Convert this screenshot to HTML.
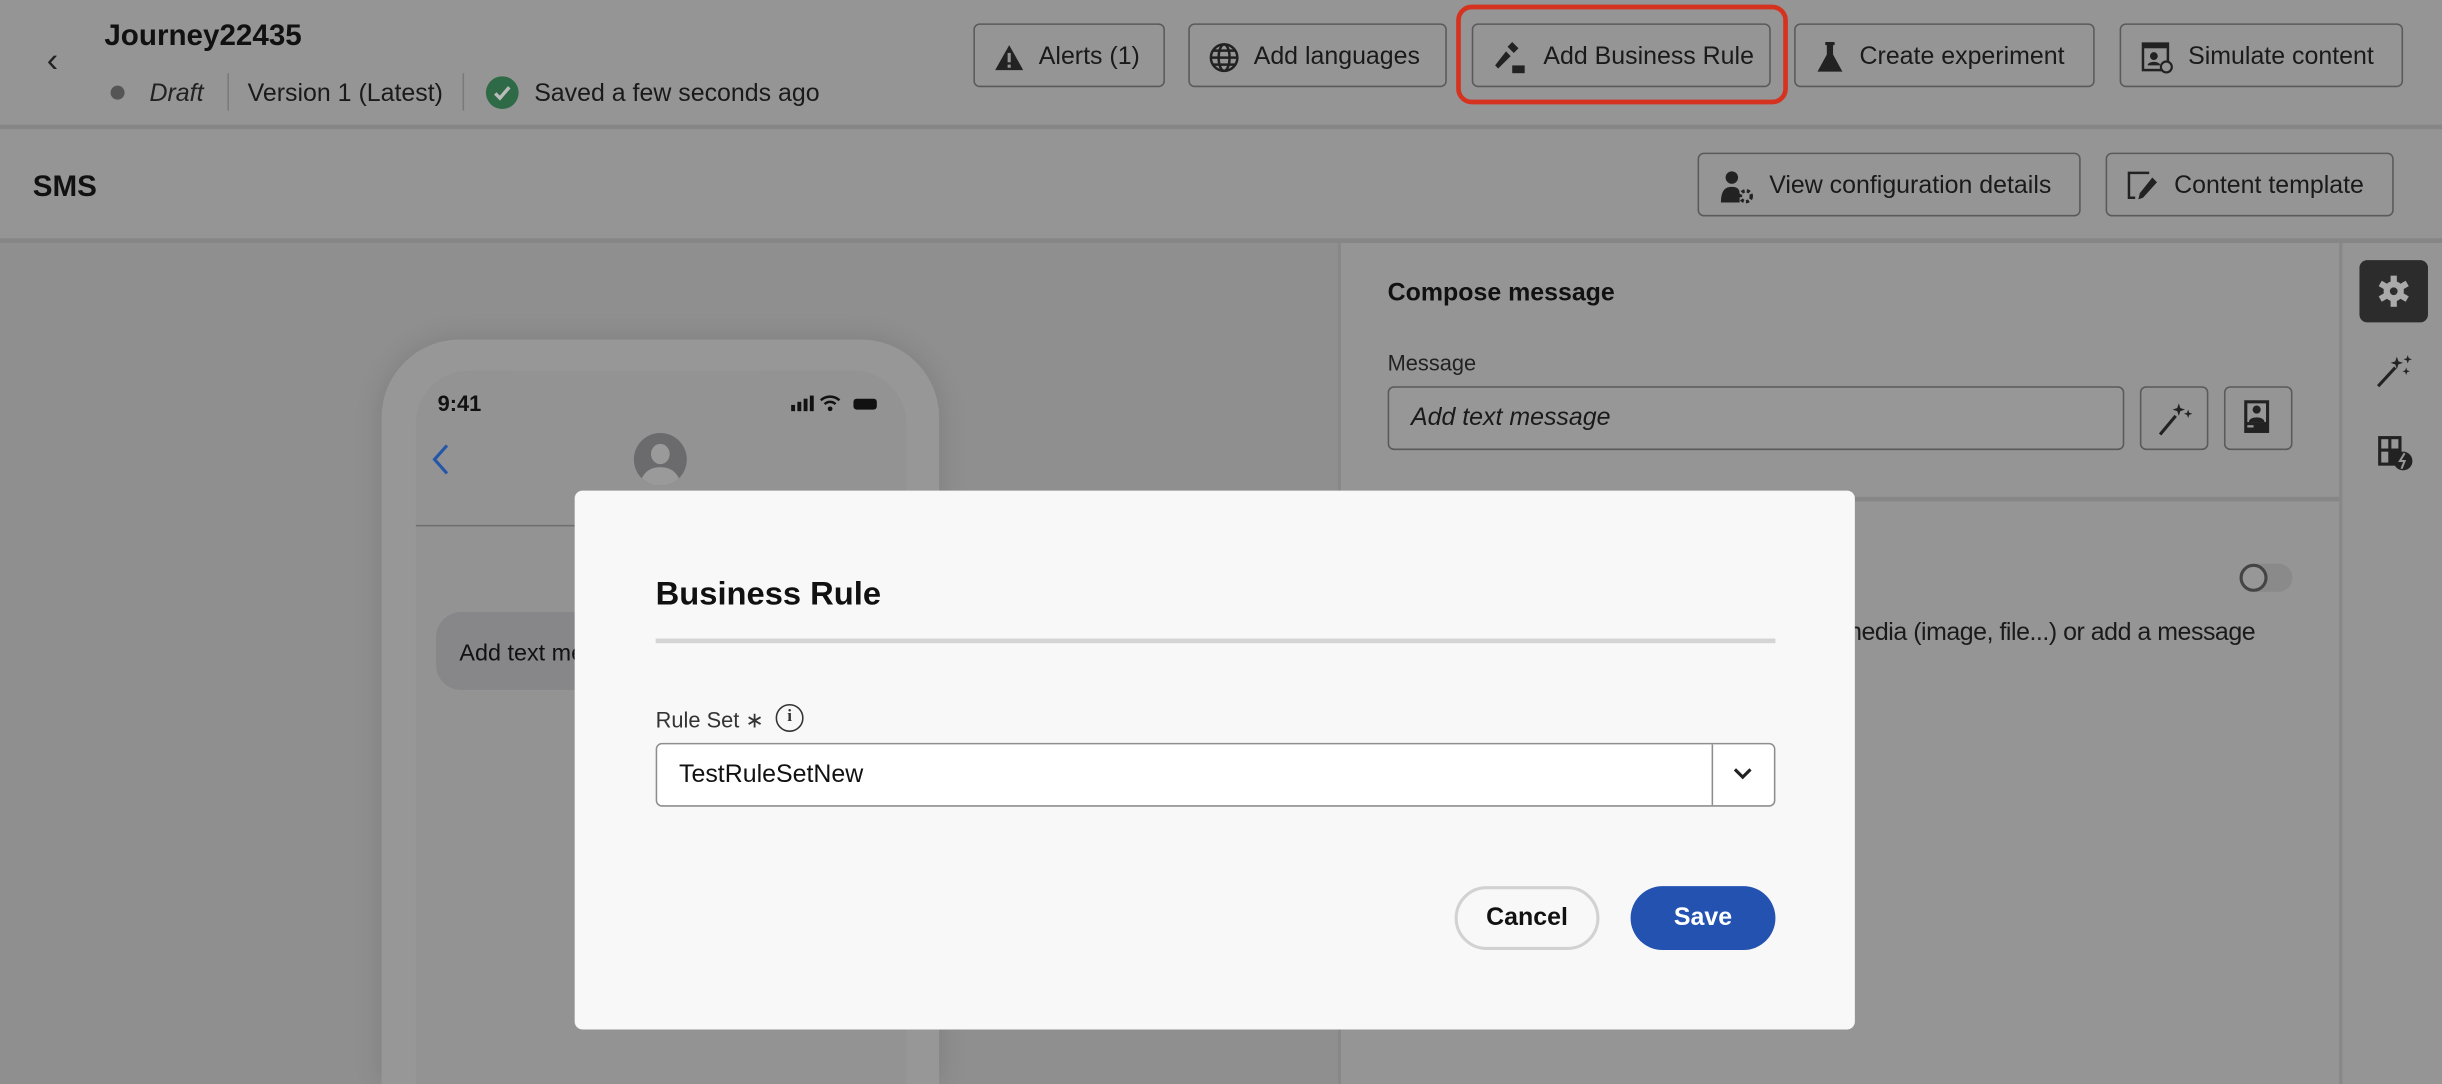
<!DOCTYPE html>
<html><head><meta charset="utf-8"><style>
*{box-sizing:border-box;margin:0;padding:0}
html,body{width:2442px;height:1084px;overflow:hidden;background:#8f8f8f;font-family:"Liberation Sans",sans-serif;color:#1c1c1c}
#w{position:absolute;left:0;top:0;width:1568px;height:696px;overflow:hidden;transform:scale(1.557398);transform-origin:0 0;background:#959595}
.a{position:absolute}
.btn{position:absolute;top:15px;height:41px;border:1.5px solid #5a5a5a;border-radius:4px;display:flex;align-items:center;font-size:16px;color:#1a1a1a;padding-left:12px;gap:9px;white-space:nowrap;padding-top:2px}
.btn2{top:98px}
svg{display:block}
</style></head><body><div id="w">
<!-- header -->
<div class="a" style="left:30px;top:26px;font-size:22px;color:#222">&#8249;</div>
<div class="a" style="left:67px;top:13px;font-size:19px;font-weight:bold;color:#111">Journey22435</div>
<div class="a" style="left:71px;top:55px;width:9px;height:9px;border-radius:50%;background:#555"></div>
<div class="a" style="left:96px;top:52px;font-size:16px;font-style:italic;color:#222">Draft</div>
<div class="a" style="left:146px;top:47px;width:1px;height:24px;background:#7a7a7a"></div>
<div class="a" style="left:159px;top:52px;font-size:16px;color:#1a1a1a">Version 1 (Latest)</div>
<div class="a" style="left:297px;top:47px;width:1px;height:24px;background:#7a7a7a"></div>
<div class="a" style="left:312px;top:49px;width:21px;height:21px;border-radius:50%;background:#2d6a45"><svg width="21" height="21"><path d="M6 11l3 3 6-7" stroke="#bbb" stroke-width="2.2" fill="none"/></svg></div>
<div class="a" style="left:343px;top:52px;font-size:16px;color:#1a1a1a">Saved a few seconds ago</div>

<div class="btn" style="left:625px;width:123px"><svg width="20" height="20"><path d="M10 2L19 18H1Z" fill="#222"/><rect x="9" y="7" width="2" height="6" fill="#959595"/><rect x="9" y="14.5" width="2" height="2" fill="#959595"/></svg>Alerts (1)</div>
<div class="btn" style="left:763px;width:166px"><svg width="20" height="20"><g stroke="#222" stroke-width="1.6" fill="none"><circle cx="10" cy="10" r="8.5"/><ellipse cx="10" cy="10" rx="3.5" ry="8.5"/><path d="M1.5 10h17M3 5.5h14M3 14.5h14"/></g></svg>Add languages</div>
<div class="btn" style="left:945px;width:192px"><svg width="24" height="24"><g fill="#222"><path d="M13 2l4 4-3 3-4-4z"/><path d="M9 8l3 3-8 8-2-2z" /><rect x="13" y="17" width="8" height="5"/></g></svg>Add Business Rule</div>
<div class="a" style="left:935px;top:3px;width:213px;height:64px;border:3px solid #d5321f;border-radius:10px"></div>
<div class="btn" style="left:1152px;width:193px"><svg width="20" height="22"><path d="M7 1h6v2h-1v6l6 11H2l6-11V3H7z" fill="#222"/></svg>Create experiment</div>
<div class="btn" style="left:1361px;width:182px"><svg width="22" height="22"><rect x="2" y="2" width="16" height="17" fill="none" stroke="#222" stroke-width="1.6"/><rect x="2" y="2" width="16" height="3" fill="#222"/><circle cx="9" cy="10" r="2.5" fill="#222"/><path d="M5 16c0-3 8-3 8 0z" fill="#222"/><circle cx="17" cy="17" r="3.5" fill="#959595" stroke="#222" stroke-width="1.4"/></svg>Simulate content</div>
<div class="a" style="left:0;top:80px;width:1568px;height:3px;background:#868686"></div>

<div class="a" style="left:21px;top:110px;font-size:19px;font-weight:bold;color:#111">SMS</div>
<div class="btn btn2" style="left:1090px;width:246px"><svg width="24" height="24"><circle cx="9" cy="6" r="4" fill="#222"/><path d="M2 22c0-8 3-10 7-10s5 2 5 4v6z" fill="#222"/><circle cx="18" cy="18" r="3.5" fill="none" stroke="#222" stroke-width="2.2" stroke-dasharray="2 1.4"/></svg>View configuration details</div>
<div class="btn btn2" style="left:1352px;width:185px"><svg width="22" height="24"><path d="M15 3H2v16h4" fill="none" stroke="#222" stroke-width="1.6"/><path d="M17 6l3 3-9 10-3 1 1-4z" fill="#222"/></svg>Content template</div>
<div class="a" style="left:0;top:153px;width:1568px;height:3px;background:#868686"></div>

<!-- left preview -->
<div class="a" style="left:0;top:156px;width:859px;height:540px;background:#8f8f8f"></div>
<div class="a" style="left:859px;top:156px;width:2px;height:540px;background:#888"></div>
<div class="a" style="left:245px;top:218px;width:358px;height:478px;border-radius:50px 50px 0 0;background:#979798;box-shadow:0 0 18px rgba(0,0,0,.12)"></div>
<div class="a" style="left:267px;top:238px;width:315px;height:458px;border-radius:34px 34px 0 0;background:#939393"></div>
<div class="a" style="left:281px;top:251px;font-size:14px;font-weight:bold;color:#111">9:41</div>
<div class="a" style="left:507px;top:252px"><svg width="60" height="14"><rect x="1" y="8" width="2.5" height="4" fill="#111"/><rect x="5" y="6" width="2.5" height="6" fill="#111"/><rect x="9" y="4" width="2.5" height="8" fill="#111"/><rect x="13" y="2" width="2.5" height="10" fill="#111"/><path d="M20 5a9 9 0 0 1 12 0M22.5 7.5a5 5 0 0 1 7 0" stroke="#111" stroke-width="1.6" fill="none"/><circle cx="26" cy="10.5" r="1.5" fill="#111"/><rect x="41" y="4" width="15" height="7" rx="2" fill="#111"/></svg></div>
<div class="a" style="left:276px;top:283px"><svg width="14" height="24"><path d="M11 3L3 12l8 9" stroke="#2457a8" stroke-width="2" fill="none"/></svg></div>
<div class="a" style="left:407px;top:278px;width:34px;height:34px;border-radius:50%;background:#6b6b6e;overflow:hidden"><div class="a" style="left:11px;top:7px;width:12px;height:13px;border-radius:50%;background:#9a9a9a"></div><div class="a" style="left:4px;top:22px;width:26px;height:12px;border-radius:13px 13px 0 0;background:#9a9a9a"></div></div>
<div class="a" style="left:267px;top:337px;width:315px;height:1px;background:#6f6f6f"></div>
<div class="a" style="left:280px;top:393px;width:120px;height:50px;border-radius:16px;background:#878789"></div>
<div class="a" style="left:295px;top:411px;font-size:15px;color:#111">Add text message</div>

<!-- right panel -->
<div class="a" style="left:891px;top:180px;font-size:16px;font-weight:bold;color:#111">Compose message</div>
<div class="a" style="left:891px;top:225px;font-size:14px;color:#222">Message</div>
<div class="a" style="left:891px;top:248px;width:473px;height:41px;border:1.5px solid #5a5a5a;border-radius:4px;background:#979797"></div>
<div class="a" style="left:906px;top:260px;font-size:16px;font-style:italic;color:#1a1a1a">Add text message</div>
<div class="a" style="left:1374px;top:248px;width:44px;height:41px;border:1.5px solid #5a5a5a;border-radius:4px"><svg width="41" height="38"><path d="M12 30l10-12" stroke="#222" stroke-width="2"/><path d="M24 10l1 3 3 1-3 1-1 3-1-3-3-1 3-1z M30 14l.7 2 2 .7-2 .7-.7 2-.7-2-2-.7 2-.7z" fill="#222"/></svg></div>
<div class="a" style="left:1428px;top:248px;width:44px;height:41px;border:1.5px solid #5a5a5a;border-radius:4px"><svg width="41" height="38"><rect x="12" y="8" width="16" height="21" fill="#222"/><rect x="14" y="10" width="12" height="12" fill="#979797"/><circle cx="20" cy="14" r="2.6" fill="#222"/><path d="M15 22c0-4 10-4 10 0z" fill="#222"/><rect x="14" y="24" width="4" height="1.5" fill="#979797"/></svg></div>
<div class="a" style="left:861px;top:319px;width:641px;height:3px;background:#868686"></div>
<div class="a" style="left:1438px;top:362px;width:34px;height:18px;border-radius:9px;background:#8a8a8a"></div>
<div class="a" style="left:1438px;top:362px;width:18px;height:18px;border-radius:50%;border:2.5px solid #444;background:#979797"></div>
<div class="a" style="right:120px;top:398px;font-size:16px;color:#1a1a1a;white-space:nowrap;letter-spacing:-0.3px">Upload media (image, file...) or add a message</div>
<div class="a" style="left:1502px;top:156px;width:2px;height:540px;background:#888"></div>
<div class="a" style="left:1515px;top:167px;width:44px;height:40px;border-radius:5px;background:#2c2c2c"><svg width="44" height="40"><g transform="translate(22 20)"><circle r="6.5" fill="#aaa"/><g fill="#aaa"><rect x="-2" y="-10" width="4" height="20"/><rect x="-2" y="-10" width="4" height="20" transform="rotate(60)"/><rect x="-2" y="-10" width="4" height="20" transform="rotate(120)"/></g><circle r="2.5" fill="#2c2c2c"/></g></svg></div>
<div class="a" style="left:1522px;top:224px"><svg width="30" height="30"><path d="M5 24l11-12" stroke="#222" stroke-width="2"/><path d="M17 5l1 3 3 1-3 1-1 3-1-3-3-1 3-1z M24 4l.7 2 2 .7-2 .7-.7 2-.7-2-2-.7 2-.7z M23 12l.6 1.8 1.8.6-1.8.6-.6 1.8-.6-1.8-1.8-.6 1.8-.6z" fill="#222"/></svg></div>
<div class="a" style="left:1525px;top:278px"><svg width="28" height="28"><rect x="2" y="2" width="15" height="19" fill="#222"/><rect x="4" y="4" width="4.5" height="6" fill="#979797"/><rect x="10.5" y="4" width="4.5" height="6" fill="#979797"/><rect x="4" y="12" width="4.5" height="7" fill="#979797"/><circle cx="18" cy="18" r="6" fill="#222"/><path d="M19 13l-3 5h3l-2 5" stroke="#979797" stroke-width="1.3" fill="none"/></svg></div>

<!-- modal -->
<div class="a" style="left:369px;top:315px;width:822px;height:346px;background:#f8f8f8;border-radius:5px"></div>
<div class="a" style="left:421px;top:370px;font-size:21px;font-weight:bold;color:#111">Business Rule</div>
<div class="a" style="left:421px;top:410px;width:719px;height:3px;background:#d5d5d5"></div>
<div class="a" style="left:421px;top:454px;font-size:14px;color:#333">Rule Set &#8727;</div>
<div class="a" style="left:498px;top:452px;width:18px;height:18px;border-radius:50%;border:1.6px solid #333;font-size:11px;text-align:center;line-height:15px;font-family:'Liberation Serif',serif;font-weight:bold;color:#333">i</div>
<div class="a" style="left:421px;top:477px;width:719px;height:41px;border:1.5px solid #8e8e8e;border-radius:4px;background:#fff"></div>
<div class="a" style="left:1099px;top:478px;width:1px;height:39px;background:#8e8e8e"></div>
<div class="a" style="left:1112px;top:491px"><svg width="14" height="12"><path d="M2 3l5 5 5-5" stroke="#222" stroke-width="2" fill="none"/></svg></div>
<div class="a" style="left:436px;top:489px;font-size:16px;color:#111">TestRuleSetNew</div>
<div class="a" style="left:934px;top:569px;width:93px;height:41px;border:2px solid #d2d2d2;border-radius:21px;font-size:16px;font-weight:bold;text-align:center;line-height:38px;color:#111">Cancel</div>
<div class="a" style="left:1047px;top:569px;width:93px;height:41px;background:#2352b0;border-radius:21px;font-size:16px;font-weight:bold;text-align:center;line-height:42px;color:#fff">Save</div>
</div></body></html>
